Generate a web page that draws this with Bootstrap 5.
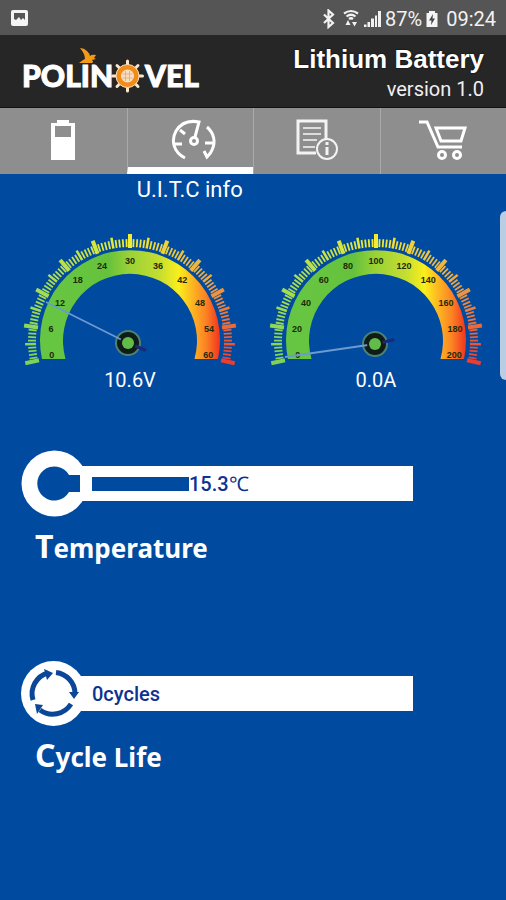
<!DOCTYPE html>
<html lang="en">
<head>
<meta charset="utf-8">
<meta name="viewport" content="width=device-width, initial-scale=1">
<title>Lithium Battery</title>
<link rel="stylesheet" href="https://cdn.jsdelivr.net/npm/bootstrap@5.3.0/dist/css/bootstrap.min.css">
<style>
  body { background: #004a9f; color: #fff; font-family: Roboto, sans-serif; }
  svg { display: block; flex: none; }
  .status-bar { background: #555; height: 35px; padding: 2px 10px 0; font-size: 20px; color: #f2f2f2; }
  .app-bar { background: #262626; height: 73px; padding: 0 22px; border-bottom: 1px solid #111; }
  .app-title { font: bold 26px/32px "Liberation Sans", Arial, sans-serif; text-shadow: 0 0 2px #000; }
  .app-version { font-size: 20px; line-height: 28px; color: #f0f0f0; }
  .logo-text { font: 900 30px Lato, sans-serif; fill: #fff; stroke: #fff; stroke-width: 1px; }
  .tab-strip { background: #8e8e8e; }
  .tab-link { height: 66px; padding: 0 0 2px; border-left: 1px solid #a9a9a9; border-bottom: 0 solid #fff; }
  .tab-link:first-child { border-left: 0; }
  .tab-link.active { border-bottom-width: 7px; padding: 5px 0 0 8px; }
  .tab-caption { font-size: 22px; line-height: 32px; }
  .gauges { padding: 24px 7px 0; }
  .gauge-value { font-size: 20px; line-height: 24px; }
  .dial-number { font: bold 9px "Liberation Sans", sans-serif; fill: #1d2a08; text-anchor: middle; }
  .meter { padding: 0 93px 0 21px; }
  .meter-temperature { margin-top: 58px; }
  .meter-cycles { margin-top: 95px; }
  .meter-icon { z-index: 1; }
  .meter-track { height: 35px; margin-left: -12px; padding-left: 16px; background: #fff; color: #0d3391; font-size: 20px; font-weight: 500; }
  .meter-fill { height: 14px; background: #004a9f; }
  .meter-name { font: bold 26px/36px "Noto Sans", sans-serif; margin: 11px 0 0 14px; }
  .meter-name::first-letter { font-size: 32px; }
  .edge-handle { top: 211px; right: 0; width: 6px; height: 169px; background: #b9cde3; border-radius: 6px 0 0 6px; }
</style>
</head>
<body class="position-relative min-vh-100">

<div class="status-bar d-flex align-items-center justify-content-between">
  <svg width="20" height="20" viewBox="0 0 20 20" aria-hidden="true">
    <rect x="1" y="1" width="17" height="16" rx="2" fill="#f4f4f4"/>
    <path d="M4 4h11v7l-2-2-2 2-2-3-3 3-2-1z" fill="#555"/>
  </svg>
  <div class="d-flex align-items-center">
    <svg width="64" height="20" viewBox="-4 0 64 20" fill="none" stroke="#f2f2f2" aria-hidden="true">
      <path d="M3 5.500l9 8.500-4.500 4V1.500L12 5.500 3 14" stroke-width="2.200"/>
      <path d="M23 4.500q7-5 14 0M25.500 7.500q4.500-3.500 9 0M28 10q2-1.500 4 0" stroke-width="2.200"/>
      <path d="M24.500 16l2.500-5 2.500 5zM31 13l2.500 4.500L36 13z" fill="#f2f2f2" stroke="none"/>
      <path d="M43 18v-2.500h2.500V18zM46.500 18v-5H49v5zM50 18v-8.500h3V18zM54 18V6.500h2V18zM57 18V2h3v16z" fill="#f2f2f2" stroke="none"/>
    </svg>
    <span class="mx-1">87%</span>
    <svg width="12" height="18" viewBox="0 0 12 18" aria-hidden="true">
      <path d="M3 1h6v2h2.500v14H.5V3H3z" fill="#f4f4f4"/><path d="M7 4L3 10.500h2.500L5 15l4-6.500H6.500z" fill="#444"/>
    </svg>
    <span class="ms-2">09:24</span>
  </div>
</div>

<header class="app-bar d-flex justify-content-between">
  <svg width="180" height="64" viewBox="0 0 180 64" role="img" aria-label="Polinovel">
    <text class="logo-text" x="0" y="52">POLIN</text>
    <text class="logo-text" x="177" y="52" text-anchor="end">VEL</text>
    <path d="M58 13q4 0 7 3 3 3 3 5 2-2 6-1l-2 3 2 1-4 1q2 2 0 3H57l4-3 2-1q0-5-5-11z" fill="#f39a18"/>
    <g transform="translate(105.500 41)">
      <g stroke="#fbe6cc" stroke-width="3" stroke-linecap="round">
        <path d="M0-15V15M-15 0H15M-10.500-10.500l21 21M10.500-10.500l-21 21"/>
      </g>
      <circle r="11.500" fill="#f28c18" stroke="#fbe0bd"/>
      <circle r="6.500" fill="#f7dfc6"/>
      <path d="M-5-2h10M-5 2h10M-2-5v10M2-5v10" stroke="#e9b07c" stroke-width="1"/>
    </g>
  </svg>
  <div class="text-end pt-2">
    <h1 class="app-title m-0">Lithium Battery</h1>
    <div class="app-version">version 1.0</div>
  </div>
</header>

<nav class="tab-strip row g-0">
  <a class="tab-link col-3 d-flex align-items-center justify-content-center" href="#battery" aria-label="Battery">
    <svg width="26" height="42" viewBox="0 0 26 42"><path d="M7 1h12v3h6v37H1V4h6zM5 7v11h16V7z" fill="#fff" fill-rule="evenodd"/></svg>
  </a>
  <a class="tab-link active col-3 d-flex align-items-center justify-content-center" href="#info" aria-label="U.I.T.C info" aria-current="page">
    <svg width="46" height="42" viewBox="0 0 46 42" fill="none" stroke="#fff" stroke-width="3">
      <path d="M14 39C2 33 0 21 5 12 10 4 18 1 28 3l-4 15"/>
      <circle cx="23" cy="22" r="3.500"/>
      <path d="M9 11l5 4M3 25h8M36 8c7 6 9 15 5 23-1 3-3 5-5 7l-3-6M43 24h-9"/>
    </svg>
  </a>
  <a class="tab-link col-3 d-flex align-items-center justify-content-center" href="#details" aria-label="Details">
    <svg width="42" height="42" viewBox="0 0 42 42" fill="none" stroke="#f3f3f3">
      <path d="M20 34H2V2h28v18" stroke-width="3"/>
      <path d="M7 9h18M7 15h18M7 21h14M7 28h12" stroke="#ddd" stroke-width="2"/>
      <circle cx="31" cy="30" r="10" fill="#8e8e8e" stroke-width="2"/>
      <path d="M31 28v8M31 23v3" stroke-width="3"/>
    </svg>
  </a>
  <a class="tab-link col-3 d-flex align-items-center justify-content-center" href="#shop" aria-label="Shop">
    <svg width="48" height="42" viewBox="0 0 48 42" fill="none" stroke="#fff" stroke-width="3">
      <path d="M0 3h8l11 25h24"/><path d="M17 9h29l-4 13H22z"/>
      <circle cx="23" cy="36" r="3.500"/><circle cx="38" cy="36" r="3.500"/>
    </svg>
  </a>
</nav>

<main>
  <div class="row g-0"><div class="tab-caption col-3 offset-3 text-center text-nowrap">U.I.T.C info</div></div>

  <section class="gauges row g-0 text-center">
    <div class="col-6">
      <svg class="dial w-100" viewBox="-123 -111 246 138" data-max="60" data-tip="-84,-39" data-tail="15,9" data-hub="-2,2" role="img" aria-label="Voltage"></svg>
      <div class="gauge-value">10.6V</div>
    </div>
    <div class="col-6">
      <svg class="dial w-100" viewBox="-123 -111 246 138" data-max="200" data-tip="-91,16" data-tail="17,-1" data-hub="-1,3" role="img" aria-label="Current"></svg>
      <div class="gauge-value">0.0A</div>
    </div>
  </section>

  <section class="meter meter-temperature">
    <div class="d-flex align-items-center">
      <svg class="meter-icon" width="67" height="67" viewBox="0 0 67 67" aria-hidden="true">
        <circle cx="33.500" cy="33.500" r="33" fill="#fff"/>
        <path d="M59 25v17H48a17 17 0 1 1 0-17z" fill="#004a9f"/>
      </svg>
      <div class="meter-track flex-grow-1 d-flex align-items-center">
        <div class="meter-fill" style="width:30.200%"></div><span>15.3℃</span>
      </div>
    </div>
    <h2 class="meter-name">Temperature</h2>
  </section>

  <section class="meter meter-cycles">
    <div class="d-flex align-items-center">
      <svg class="meter-icon" width="67" height="65" viewBox="0 0 67 65" aria-hidden="true">
        <circle cx="32.500" cy="32.500" r="32.500" fill="#fff"/>
        <g fill="none" stroke="#0a4798" stroke-width="5">
          <path d="M12 39A21.500 21.500 0 0 1 27 12M35 11.500A21.500 21.500 0 0 1 54 32M50 43A21.500 21.500 0 0 1 19 49"/>
        </g>
        <path d="M23 8l9 4-6 7zM48 31h10l-5 7zM14 43l8 1-6 9z" fill="#0a4798"/>
      </svg>
      <div class="meter-track flex-grow-1 d-flex align-items-center"><span>0cycles</span></div>
    </div>
    <h2 class="meter-name">Cycle Life</h2>
  </section>
</main>

<button class="edge-handle position-absolute border-0 p-0" type="button" aria-label="Edge panel"></button>

<svg width="0" height="0" class="position-absolute" aria-hidden="true">
  <defs>
    <linearGradient id="band" gradientUnits="userSpaceOnUse" x1="-90" y1="0" x2="90" y2="0">
      <stop offset="0" stop-color="#66c643"/><stop offset=".38" stop-color="#66c23c"/>
      <stop offset=".5" stop-color="#9bd236"/><stop offset=".66" stop-color="#c3dd31"/>
      <stop offset=".77" stop-color="#fbee1c"/><stop offset=".84" stop-color="#fdba22"/>
      <stop offset=".92" stop-color="#fb8424"/><stop offset="1" stop-color="#f2331f"/>
    </linearGradient>
  </defs>
</svg>

<script src="https://cdn.jsdelivr.net/npm/bootstrap@5.3.0/dist/js/bootstrap.bundle.min.js"></script>
<script>
  // Draws each dial: coloured band, tick ring, numbers, needle and hub.
  const sweep = 204, start = -102;
  const polar = (r, deg) => {
    const a = deg * Math.PI / 180;
    return [r * Math.sin(a), -r * Math.cos(a)].map(v => v.toFixed(1));
  };
  const stops = [[126, 211, 87], [176, 224, 76], [240, 236, 50], [240, 170, 66], [236, 62, 48]];
  const tickColour = t => {
    const p = Math.min(t * 4, 3.999), i = Math.floor(p), f = p - i;
    return `rgb(${stops[i].map((c, k) => Math.round(c + (stops[i + 1][k] - c) * f))})`;
  };
  document.querySelectorAll('.dial').forEach(dial => {
    const d = dial.dataset;
    let out = '<path d="M-88 18A90 90 0 1 1 88 18H64.500A67 67 0 1 0-64.500 18z" fill="url(#band)"/>';
    for (let i = 0; i <= 100; i++) {
      const deg = start + sweep * i / 100, major = i % 10 === 0, mid = i % 5 === 0;
      const a = polar(major ? 93 : 94, deg), b = polar(major ? 107 : mid ? 105 : 102, deg);
      out += `<path d="M${a}L${b}" stroke="${tickColour(i / 100)}" stroke-width="${major ? 4 : mid ? 2.5 : 1.8}"/>`;
    }
    for (let i = 0; i <= 10; i++) {
      const [x, y] = polar(80, start + sweep * i / 10);
      out += `<text class="dial-number" x="${x}" y="${+y + (i % 10 ? 3 : 0)}">${d.max * i / 10}</text>`;
    }
    const hub = d.hub.split(',');
    out += `<circle cx="${hub[0]}" cy="${hub[1]}" r="12" fill="#101c18" stroke="#4d8173" stroke-width="2"/>
      <path d="M${d.tip}L${hub}" stroke="#6d9ad0" stroke-width="1.800"/>
      <path d="M${hub}L${d.tail}" stroke="#1c2878" stroke-width="3" stroke-linecap="round"/>
      <circle cx="${hub[0]}" cy="${hub[1]}" r="8" fill="#101c18"/>
      <circle cx="${hub[0]}" cy="${hub[1]}" r="6" fill="#62bd48"/>`;
    dial.innerHTML = out;
  });
</script>
</body>
</html>
